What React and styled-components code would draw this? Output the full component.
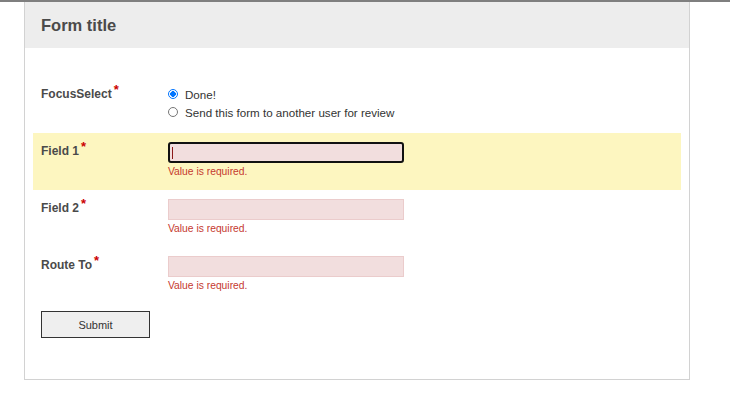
import React from 'react'
import styled, { createGlobalStyle } from 'styled-components'

const GlobalStyle = createGlobalStyle`
  body {
    margin: 0;
    background: #fff;
    font-family: 'Liberation Sans', Arial, sans-serif;
  }
`

const TopLine = styled.div`
  height: 2px;
  background: #7f7f7f;
`

const Card = styled.div`
  margin-left: 24px;
  width: 666px;
  box-sizing: border-box;
  border: 1px solid #d2d2d2;
  border-top: none;
`

const Header = styled.header`
  height: 46px;
  line-height: 46px;
  padding-left: 16px;
  background: #ededed;
  color: #4a4a4a;
  font-size: 16.5px;
  font-weight: bold;
`

const Body = styled.div`
  padding: 28px 8px 41px;
`

const Row = styled.div`
  display: flex;
  height: 57px;
  box-sizing: border-box;
  padding: 9px 8px 0;
  background: ${(p) => (p.$active ? '#fdf6c0' : 'transparent')};
`

const Label = styled.div`
  width: 127px;
  flex-shrink: 0;
  margin-top: 2px;
  line-height: 14px;
  font-size: 12px;
  font-weight: bold;
  color: #4a4a4a;

  sup {
    color: #c00;
    font-size: 13px;
    margin-left: 2px;
    vertical-align: 4px;
    line-height: 0;
  }
`

const Field = styled.div`
  display: flex;
  flex-direction: column;
`

const Input = styled.div`
  width: 236px;
  height: 21px;
  box-sizing: border-box;
  background: #f2dede;
  border: ${(p) => (p.$focused ? '2px solid #111' : '1px solid #ebcccc')};
  border-radius: ${(p) => (p.$focused ? '3px' : '0')};
  position: relative;

  ${(p) =>
    p.$focused &&
    `&::after {
      content: '';
      position: absolute;
      left: 2px;
      top: 3px;
      width: 1px;
      height: 12px;
      background: #8b1a1a;
    }`}
`

const Error = styled.div`
  margin-top: 3px;
  font-size: 10.3px;
  line-height: 12px;
  color: #c5392f;
`

const Option = styled.label`
  display: flex;
  align-items: center;
  gap: 7px;
  height: 18px;
  font-size: 11.6px;
  color: #333;
`

const Radio = styled.span`
  width: 10px;
  height: 10px;
  box-sizing: border-box;
  border-radius: 50%;
  border: 1px solid ${(p) => (p.$checked ? '#0075ff' : '#767676')};
  background: ${(p) =>
    p.$checked ? 'radial-gradient(circle, #0075ff 0 2.6px, #fff 3px)' : '#fff'};
`

const Submit = styled.button`
  margin: 7px 0 0 8px;
  width: 109px;
  height: 27px;
  background: #efefef;
  border: 1px solid #333;
  font-family: 'Liberation Sans', Arial, sans-serif;
  font-size: 11px;
  color: #333;
  padding: 0;
`

const fields = [
  { label: 'Field 1', active: true },
  { label: 'Field 2' },
  { label: 'Route To' },
]

export default function App() {
  return (
    <>
      <GlobalStyle />
      <TopLine />
      <Card>
        <Header>Form title</Header>
        <Body>
          <Row>
            <Label>
              FocusSelect<sup>*</sup>
            </Label>
            <Field>
              <Option>
                <Radio $checked />
                Done!
              </Option>
              <Option>
                <Radio />
                Send this form to another user for review
              </Option>
            </Field>
          </Row>
          {fields.map((f) => (
            <Row key={f.label} $active={f.active}>
              <Label>
                {f.label}
                <sup>*</sup>
              </Label>
              <Field>
                <Input $focused={f.active} />
                <Error>Value is required.</Error>
              </Field>
            </Row>
          ))}
          <Submit>Submit</Submit>
        </Body>
      </Card>
    </>
  )
}
